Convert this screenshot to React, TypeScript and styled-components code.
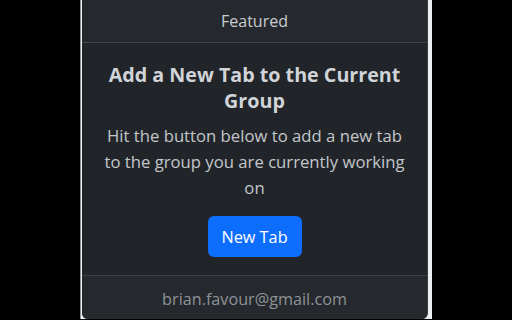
import React from "react";
import styled, { createGlobalStyle } from "styled-components";

const Global = createGlobalStyle`
  html, body { margin: 0; padding: 0; background: #000; }
  body { font-family: "Open Sans", "Noto Sans", sans-serif; }
`;

const Page = styled.div`
  width: 512px;
  height: 320px;
  display: flex;
  padding-left: 80px;
  box-sizing: border-box;
  background: #000;
`;

const Frame = styled.div`
  width: 352px;
  height: 319px;
  display: flex;
  background: #eceeef;
  border-left: 1px solid #8d9093;
  padding: 0 4px 0 1px;
  box-sizing: border-box;
`;

const Card = styled.div`
  flex: 1;
  display: flex;
  flex-direction: column;
  background: #212529;
  border-right: 1px solid #3a3e43;
  border-radius: 0 0 6px 6px;
  overflow: hidden;
`;

const Header = styled.div`
  height: 42px;
  display: flex;
  align-items: center;
  justify-content: center;
  background: #25282c;
  border-bottom: 1px solid #41454a;
  color: #c9cdd1;
  font-size: 16px;
`;

const Body = styled.div`
  flex: 1;
  display: flex;
  flex-direction: column;
  align-items: center;
  text-align: center;
  padding: 19px 10px 0;
`;

const Title = styled.h4`
  margin: 0;
  font-size: 19.7px;
  line-height: 26px;
  font-weight: 700;
  color: #d0d4d8;
`;

const Text = styled.p`
  margin: 9px 0 0;
  font-size: 16.7px;
  line-height: 25.8px;
  color: #c3c7cb;
`;

const Button = styled.button`
  margin-top: 16px;
  width: 94px;
  height: 41px;
  border: none;
  border-radius: 6px;
  background: #0d6efd;
  color: #fff;
  font-family: inherit;
  font-size: 16.3px;
`;

const Footer = styled.div`
  height: 44px;
  display: flex;
  align-items: center;
  justify-content: center;
  background: #25282c;
  border-top: 1px solid #3e4247;
  color: #8e9398;
  font-size: 16.2px;
  padding-top: 2px;
  box-sizing: border-box;
`;

export default function App() {
  return (
    <>
      <Global />
      <Page>
        <Frame>
          <Card>
            <Header>Featured</Header>
            <Body>
              <Title>
                Add a New Tab to the Current
                <br />
                Group
              </Title>
              <Text>
                Hit the button below to add a new tab
                <br />
                to the group you are currently working
                <br />
                on
              </Text>
              <Button>New Tab</Button>
            </Body>
            <Footer>brian.favour@gmail.com</Footer>
          </Card>
        </Frame>
      </Page>
    </>
  );
}
